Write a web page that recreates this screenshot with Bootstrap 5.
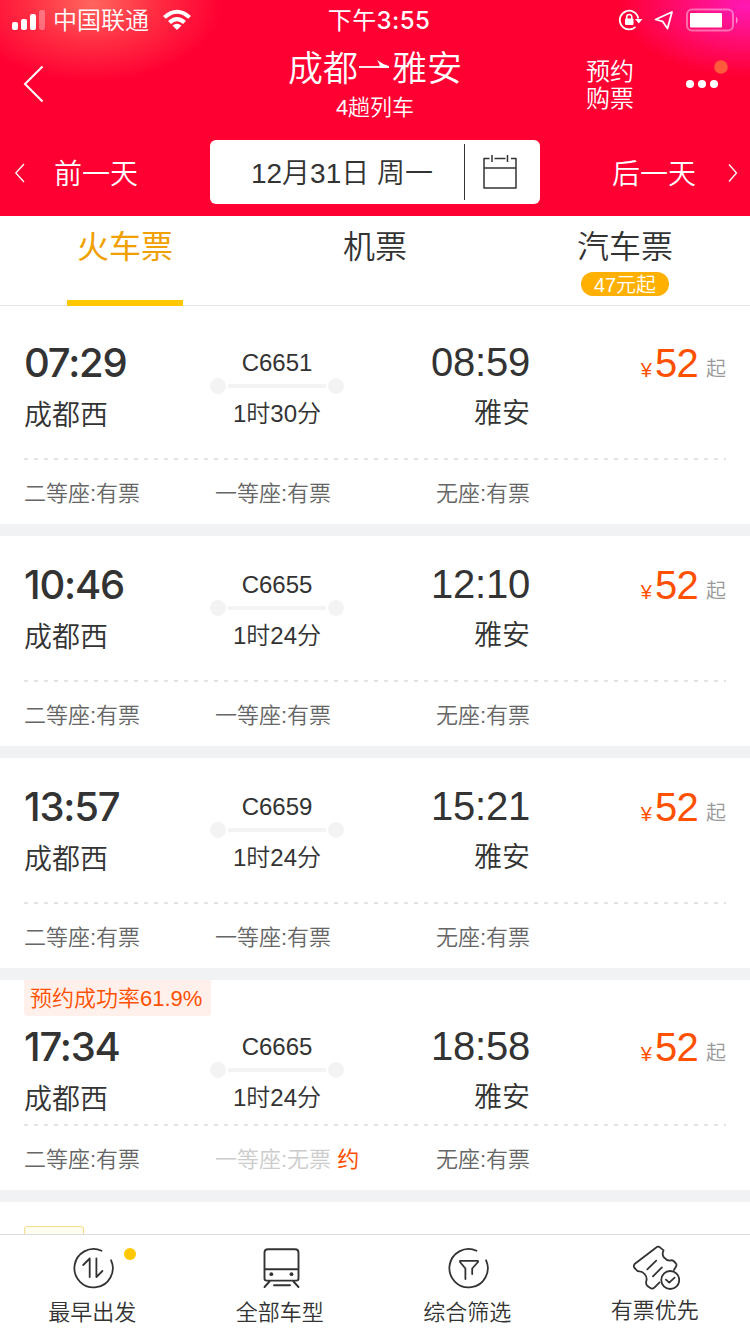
<!DOCTYPE html>
<html lang="zh-CN">
<head>
<meta charset="utf-8">
<meta name="viewport" content="width=device-width, initial-scale=1">
<title>成都 - 雅安</title>
<link href="https://cdn.jsdelivr.net/npm/bootstrap@5.3.0/dist/css/bootstrap.min.css" rel="stylesheet">
<style>
  body { font-family: "Liberation Sans", "Noto Sans CJK SC", sans-serif; font-weight: 350; color: #333; background: #fff; }
  .screen { width: 750px; height: 1334px; }
  .top-area {
    height: 216px;
    background:
      radial-gradient(ellipse 130px 78px at 92px 4px, rgba(255,112,98,.9), rgba(255,80,78,.55) 50%, rgba(255,0,51,0)),
      radial-gradient(ellipse 125px 70px at 745px 6px, #ff18b4, rgba(255,20,150,.7) 45%, rgba(255,0,51,0)),
      #ff0033;
  }
  .status { height: 40px; }
  .status-side { width: 250px; }
  .carrier { font-size: 24px; line-height: 38px; padding-top: 2px; }
  .clock { font-size: 24px; line-height: 42px; font-family: Inter, "Noto Sans CJK SC", sans-serif; font-weight: 500; letter-spacing: .4px; }
  .clock span { font-weight: 400; }
  .titlebar { height: 88px; }
  .titlebar h1 { font-size: 35px; line-height: 46px; font-weight: 350; }
  .title-arrow { margin-bottom: 9px; }
  .count { font-size: 22px; line-height: 32px; }
  .book { font-size: 24px; line-height: 27px; width: 48px; margin-top: 18px; }
  .day { width: 210px; height: 88px; padding-top: 2px; font-size: 28px; line-height: 80px; }
  .day span { padding-top: 4px; }
  .date-box { width: 330px; height: 64px; border-radius: 6px; margin-top: 12px; font-size: 28px; color: #333; }
  .date-text { width: 254px; padding: 4px 0 0 10px; line-height: 66px; }
  .date-rule { width: 1px; height: 56px; background: #333; }
  .kinds { height: 90px; border-bottom: 1px solid #e8e8e8; }
  .kind { font-size: 32px; line-height: 44px; padding-top: 9px; }
  .kind.current { color: #f0a000; font-weight: 400; }
  .current-bar { width: 116px; height: 6px; background: #ffc800; margin-top: 31px; }
  .from-price { width: 88px; height: 24px; border-radius: 12px; background: #ffb000; font-size: 20px; line-height: 26px; margin-top: 3px; }
  .trip { height: 210px; }
  .gap-band { height: 12px; background: #f0f2f4; }
  .trip-main { height: 144px; padding: 26px 24px 0; }
  .trip-main.tagged { padding-top: 0; }
  .c1 { width: 186px; } .c2 { width: 134px; } .c3 { width: 186px; } .c4 { width: 196px; }
  .t-from { font: 450 40px/46px Inter, sans-serif; letter-spacing: -1.2px; }
  .t-to { font-size: 40px; line-height: 45px; letter-spacing: -.2px; }
  .place { font-size: 28px; line-height: 36px; margin-top: 12px; }
  .c3 .place { margin-top: 11px; }
  .meta { font-size: 24px; line-height: 30px; margin-top: 8px; }
  .meta-2 { font-size: 24px; line-height: 30px; margin-top: 5px; }
  .track { width: 134px; height: 16px; }
  .track i { width: 16px; height: 16px; background: #f3f3f3; }
  .track b { width: 98px; height: 4px; background: #f3f3f3; }
  .price { color: #ff5000; line-height: 46px; }
  .yen { font-size: 20px; margin-right: 3px; }
  .amount { font-size: 40px; letter-spacing: -.7px; }
  .qi { font-size: 20px; color: #999; margin-left: 8px; position: relative; top: -1px; }
  .dash { height: 2px; margin: 0 24px; background: repeating-linear-gradient(90deg, #e3e3e3 0 4px, transparent 4px 10px); }
  .seats { font-size: 22px; line-height: 30px; color: #666; padding: 19px 24px 0; }
  .seats .c2 { padding-left: 5px; }
  .seats .soldout { color: #ccc; }
  .hot { color: #ff5000; }
  .rate-tag { width: 187px; height: 36px; margin-bottom: 8px; border-radius: 0 0 4px 4px; background: #fff0ec; color: #ff5000; font-size: 22px; line-height: 38px; padding-left: 6px; }
  .next-tag { width: 60px; height: 30px; margin: 24px 0 0 24px; border: 1px solid #f4dc8a; border-radius: 3px; background: #fffdf0; }
  .toolbar-area { height: 100px; border-top: 1px solid #d9dbdc; }
  .tool { padding-right: 3px; padding-top: 10px; font-size: 22px; line-height: 30px; color: #333; }
  .tool svg { margin-bottom: 7px; }
  .tool.ticket svg { margin-bottom: 5px; }
  .dot-new { width: 12px; height: 12px; background: #ffc800; top: 13px; left: 124px; }
</style>
</head>
<body>
<div class="screen position-relative overflow-hidden">

  <header class="top-area text-white">
    <div class="status d-flex">
      <div class="status-side d-flex align-items-center">
        <svg width="38" height="22" viewBox="0 0 38 22" class="ms-2" fill="#fff"><rect x="4" y="13" width="6" height="8" rx="2"/><rect x="13" y="10" width="6" height="11" rx="2"/><rect x="22" y="5" width="6" height="16" rx="2"/><rect x="31" y="1" width="6" height="20" rx="2" opacity=".3"/></svg>
        <span class="carrier" style="margin-left:7px">中国联通</span>
        <svg width="30" height="22" viewBox="0 0 30 22" style="margin-left:13px" fill="#fff"><path d="M1 7Q15-5.500 29 7L26.200 9.800Q15-.5 3.800 9.800Z"/><path d="M6 12Q15 4 24 12L21 15Q15 9.500 9 15Z"/><path d="M10.500 16.500Q15 13 19.500 16.500L15 21Z"/></svg>
      </div>
      <div class="clock text-center flex-fill ps-2"><span>下午</span>3:55</div>
      <div class="status-side d-flex align-items-center justify-content-end">
        <svg width="24" height="24" viewBox="0 0 24 24" fill="none" stroke="#fff" stroke-width="1.800"><path d="M17.500 18.800A9.300 9.300 0 1 1 20.300 10.500"/><path d="M17 11H24.500L20.800 15.500Z" fill="#fff" stroke="none"/><rect x="7" y="10.500" width="8.500" height="6.500" rx="1" fill="#fff" stroke="none"/><path d="M8.700 11V9a2.500 2.500 0 0 1 5.100 0v2" stroke-width="1.600"/></svg>
        <svg width="20" height="20" viewBox="0 0 20 20" style="margin-left:12px" fill="none" stroke="#fff" stroke-width="1.800" stroke-linejoin="round"><path d="M18 2L1.500 9.500L8.500 11.300L13.500 18.500Z"/></svg>
        <svg width="54" height="24" viewBox="0 0 54 24" style="margin:0 10px 0 12px"><rect x="1" y="1.500" width="46" height="21" rx="5" fill="none" stroke="#fff" stroke-opacity=".4" stroke-width="2"/><rect x="4" y="5" width="32" height="14.500" rx="1" fill="#fff"/><path d="M50 8.500Q53.500 12 50 16Z" fill="#fff" opacity=".5"/></svg>
      </div>
    </div>

    <div class="titlebar d-flex">
      <div class="status-side"><svg width="24" height="40" viewBox="0 0 24 40" style="margin:24px 0 0 22px" fill="none" stroke="#fff" stroke-width="2"><path d="M20.500 2.500L3 20L20.500 37.500"/></svg></div>
      <div class="flex-fill text-center" style="padding-top:6px">
        <h1 class="m-0 d-flex justify-content-center align-items-center">成都<svg class="title-arrow" width="34" height="12" viewBox="-1 0 34 12"><path d="M0 8H30" stroke="#fff" stroke-width="1.800"/><path d="M18 1Q23 5 30 7V9H21Q20.500 4 18 1Z" fill="#fff"/></svg>雅安</h1>
        <div class="count">4趟列车</div>
      </div>
      <div class="status-side d-flex">
        <div class="book" style="margin-left:86px">预约购票</div>
        <svg width="44" height="30" viewBox="0 0 44 30" style="margin:20px 0 0 51px"><g fill="#fff"><circle cx="5" cy="24" r="4"/><circle cx="17" cy="24" r="4"/><circle cx="29" cy="24" r="4"/></g><circle cx="36" cy="7" r="6.800" fill="#ff5a3c"/></svg>
      </div>
    </div>

    <div class="d-flex justify-content-between">
      <div class="day d-flex align-items-center" style="padding-left:14px"><svg width="12" height="20" viewBox="0 0 12 20" fill="none" stroke="#fff" stroke-width="1.300"><path d="M10 1L1.800 10L10 19"/></svg><span style="margin-left:28px">前一天</span></div>
      <div class="date-box bg-white d-flex align-items-center">
        <div class="date-text text-center">12月31日 周一</div>
        <div class="date-rule"></div>
        <svg width="36" height="36" viewBox="0 0 36 36" style="margin-left:17px" fill="none" stroke="#333" stroke-width="1.500"><path d="M7.500 4.500H2V34H34V4.500H29M12.500 4.500H23.500M2 14H34M10 1V8M25.500 1V8" stroke-linejoin="round"/></svg>
      </div>
      <div class="day d-flex align-items-center justify-content-end" style="padding-right:11px"><span style="margin-right:31px">后一天</span><svg width="12" height="20" viewBox="0 0 12 20" fill="none" stroke="#fff" stroke-width="1.300"><path d="M2 1.500L9.500 10L2 18.500"/></svg></div>
    </div>
  </header>

  <nav class="kinds row g-0 text-center">
    <div class="col-4 kind current d-flex flex-column align-items-center">火车票<div class="current-bar"></div></div>
    <div class="col-4 kind">机票</div>
    <div class="col-4 kind d-flex flex-column align-items-center">汽车票<span class="from-price text-white">47元起</span></div>
  </nav>

  <main class="pt-2">
    <section class="trip">
      <div class="trip-main d-flex">
        <div class="c1"><div class="t-from">07:29</div><div class="place">成都西</div></div>
        <div class="c2 text-center"><div class="meta">C6651</div><div class="track d-flex align-items-center justify-content-between"><i class="rounded-circle"></i><b></b><i class="rounded-circle"></i></div><div class="meta-2">1时30分</div></div>
        <div class="c3 text-end"><div class="t-to">08:59</div><div class="place">雅安</div></div>
        <div class="c4 price d-flex justify-content-end align-items-baseline"><span class="yen">¥</span><span class="amount">52</span><span class="qi">起</span></div>
      </div>
      <div class="dash"></div>
      <div class="seats d-flex"><div class="c1">二等座:有票</div><div class="c2 text-nowrap">一等座:有票</div><div class="c3 text-end">无座:有票</div></div>
    </section>
    <div class="gap-band"></div>

    <section class="trip">
      <div class="trip-main d-flex">
        <div class="c1"><div class="t-from">10:46</div><div class="place">成都西</div></div>
        <div class="c2 text-center"><div class="meta">C6655</div><div class="track d-flex align-items-center justify-content-between"><i class="rounded-circle"></i><b></b><i class="rounded-circle"></i></div><div class="meta-2">1时24分</div></div>
        <div class="c3 text-end"><div class="t-to">12:10</div><div class="place">雅安</div></div>
        <div class="c4 price d-flex justify-content-end align-items-baseline"><span class="yen">¥</span><span class="amount">52</span><span class="qi">起</span></div>
      </div>
      <div class="dash"></div>
      <div class="seats d-flex"><div class="c1">二等座:有票</div><div class="c2 text-nowrap">一等座:有票</div><div class="c3 text-end">无座:有票</div></div>
    </section>
    <div class="gap-band"></div>

    <section class="trip">
      <div class="trip-main d-flex">
        <div class="c1"><div class="t-from">13:57</div><div class="place">成都西</div></div>
        <div class="c2 text-center"><div class="meta">C6659</div><div class="track d-flex align-items-center justify-content-between"><i class="rounded-circle"></i><b></b><i class="rounded-circle"></i></div><div class="meta-2">1时24分</div></div>
        <div class="c3 text-end"><div class="t-to">15:21</div><div class="place">雅安</div></div>
        <div class="c4 price d-flex justify-content-end align-items-baseline"><span class="yen">¥</span><span class="amount">52</span><span class="qi">起</span></div>
      </div>
      <div class="dash"></div>
      <div class="seats d-flex"><div class="c1">二等座:有票</div><div class="c2 text-nowrap">一等座:有票</div><div class="c3 text-end">无座:有票</div></div>
    </section>
    <div class="gap-band"></div>

    <section class="trip">
      <div class="trip-main tagged">
        <div class="rate-tag text-nowrap">预约成功率61.9%</div>
        <div class="d-flex">
          <div class="c1"><div class="t-from">17:34</div><div class="place">成都西</div></div>
          <div class="c2 text-center"><div class="meta">C6665</div><div class="track d-flex align-items-center justify-content-between"><i class="rounded-circle"></i><b></b><i class="rounded-circle"></i></div><div class="meta-2">1时24分</div></div>
          <div class="c3 text-end"><div class="t-to">18:58</div><div class="place">雅安</div></div>
          <div class="c4 price d-flex justify-content-end align-items-baseline"><span class="yen">¥</span><span class="amount">52</span><span class="qi">起</span></div>
        </div>
      </div>
      <div class="dash"></div>
      <div class="seats d-flex"><div class="c1">二等座:有票</div><div class="c2 text-nowrap soldout">一等座:无票 <span class="hot fw-normal">约</span></div><div class="c3 text-end">无座:有票</div></div>
    </section>
    <div class="gap-band"></div>
    <div class="next-tag"></div>
  </main>

  <footer class="toolbar-area fixed-bottom bg-white row g-0 text-center">
    <div class="col-3 tool position-relative">
      <svg class="d-block mx-auto" width="48" height="46" viewBox="0 0 48 46" fill="none" stroke="#333" stroke-width="1.800" stroke-linecap="round"><path d="M33.500 5.700A19.200 19.200 0 1 0 43.100 15.300"/><path d="M15.200 20L21.700 13.500V32M28.400 13.500V32L34.400 26" stroke-linejoin="round"/></svg>
      最早出发<span class="dot-new position-absolute rounded-circle"></span>
    </div>
    <div class="col-3 tool">
      <svg class="d-block mx-auto" width="48" height="46" viewBox="0 0 48 46" fill="none" stroke="#333" stroke-width="1.900" stroke-linecap="round"><path d="M12 4.200H39Q42.500 4.200 42.500 7.500V33.500Q42.500 35.600 40.500 35.600H10.500Q8.500 35.600 8.500 33.500V7.500Q8.500 4.200 12 4.200ZM8.500 24.200H42.500M18 40.200H34M13.500 36.500L8.500 42M37.500 36.500L42.500 42"/><circle cx="15.300" cy="29.200" r="1.900" fill="#333" stroke="none"/><circle cx="35.500" cy="29.200" r="1.900" fill="#333" stroke="none"/></svg>
      全部车型
    </div>
    <div class="col-3 tool">
      <svg class="d-block mx-auto" width="48" height="46" viewBox="0 0 48 46" fill="none" stroke="#333" stroke-width="1.800" stroke-linecap="round" stroke-linejoin="round"><path d="M33.500 5.700A19.200 19.200 0 1 0 43.100 15.300"/><path d="M22.400 34V23.500L17 17V15.800H35V17L29.200 23.500V29"/></svg>
      综合筛选
    </div>
    <div class="col-3 tool ticket">
      <svg class="d-block mx-auto" width="50" height="46" viewBox="14.250 15 150 138" fill="none" stroke="#333" stroke-width="5.400" stroke-linecap="round" stroke-linejoin="round"><circle cx="135" cy="120" r="27"/><path d="M122 119L132 128L148 113"/><path d="M103 127L88 142Q81 149 74 143L66 137Q61 132 63 124Q67 112 58 102Q50 93 41 94Q36 94 31 87L27 83Q24 77 29 71L92 23Q99 17 105 23L115 31Q109 43 116 52Q124 61 133 62Q140 59 145 63L151 69Q156 75 152 80L146 90"/><path d="M66 88L93 62M83 109L110 82"/></svg>
      有票优先
    </div>
  </footer>
</div>
<script src="https://cdn.jsdelivr.net/npm/bootstrap@5.3.0/dist/js/bootstrap.bundle.min.js"></script>
</body>
</html>
